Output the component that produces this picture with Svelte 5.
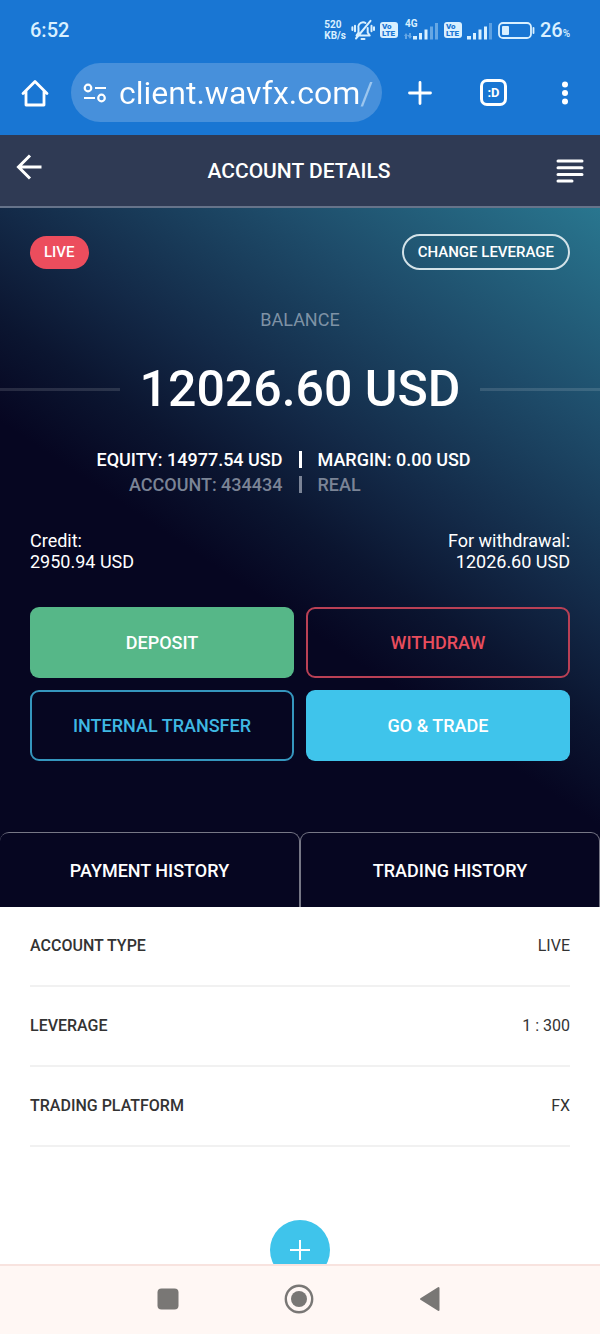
<script>
  const tabs = ['PAYMENT HISTORY', 'TRADING HISTORY'];
  const details = [
    ['ACCOUNT TYPE', 'LIVE'],
    ['LEVERAGE', '1 : 300'],
    ['TRADING PLATFORM', 'FX']
  ];
  let address = $state('client.wavfx.com/');
</script>

{#snippet volte()}
  <span class="volte"><span>Vo</span><span>LTE</span></span>
{/snippet}

<div class="screen">
  <div class="status">
    <time>6:52</time>
    <div class="indicators">
      <span class="speed"><span>520</span><span>KB/s</span></span>
      <svg class="bell" width="24" height="22" viewBox="0 0 24 22" fill="none" stroke="currentColor" stroke-width="2" stroke-linecap="round">
        <path d="M5.500 16.500h13.200M7.500 14V9.500a4.800 4.800 0 0 1 4.500-6.200q1.500 0 2.500.7M16.700 9v4.500l2 3M5.500 16.500l2-3M5 19.500 19.500 1.800" />
        <path d="M10.500 20h3M4 6.800v5.400M20.500 6.800v5.400M1.400 8.200v2.800M23 8.200v2.800" />
      </svg>
      {@render volte()}
      <span class="mobile">
        <span class="gen">4G</span>
        <svg width="36" height="19" viewBox="0 0 36 19" fill="currentColor">
          <path opacity=".4" d="M1 15l2-3 2 3H4v3H2v-3zM5 14h1v-2h2v3h1l-2 3-2-3z" />
          <rect x="10" y="15" width="4" height="3.500" /><rect x="16" y="12" width="3" height="6.500" />
          <rect x="21.500" y="8.500" width="3" height="10" />
          <g opacity=".4"><rect x="27" y="5.500" width="3" height="13" /><rect x="32" y="2" width="3" height="16.500" /></g>
        </svg>
      </span>
      {@render volte()}
      <svg width="26" height="19" viewBox="0 0 26 19" fill="currentColor">
        <rect y="15" width="4" height="3.500" /><rect x="6" y="12" width="3" height="6.500" />
        <rect x="11.500" y="8.500" width="3" height="10" /><rect x="17" y="5.500" width="3" height="13" />
        <rect opacity=".35" x="22" y="2" width="3" height="16.500" />
      </svg>
      <svg class="battery" width="37" height="17" viewBox="0 0 37 17">
        <rect x="1" y="1" width="32" height="15" rx="4" fill="none" stroke="currentColor" stroke-width="1.800" />
        <rect x="4" y="4" width="7" height="9" rx="1" fill="currentColor" />
        <path d="M35.500 6v5" stroke="currentColor" stroke-width="1.800" stroke-linecap="round" />
      </svg>
      <span class="charge">26<small>%</small></span>
    </div>
  </div>

  <div class="browser">
    <button class="plain" aria-label="Home">
      <svg width="28" height="28" viewBox="0 0 28 28" fill="none" stroke="currentColor" stroke-width="2.800" stroke-linejoin="round" stroke-linecap="round">
        <path d="M2 14.500 14 2.500l12 12M5 12v14h18V12" />
      </svg>
    </button>
    <label class="omnibox">
      <svg width="24" height="20" viewBox="0 0 24 20" fill="none" stroke="currentColor" stroke-width="2.200">
        <circle cx="5" cy="5" r="3.300" /><path d="M12 5h11M1 15h11" /><circle cx="18.500" cy="15" r="3.300" />
      </svg>
      <span class="address">
        <input bind:value={address} aria-label="Address" />
      </span>
    </label>
    <div class="controls">
      <button class="plain" aria-label="New tab">
        <svg width="24" height="24" viewBox="0 0 24 24" stroke="currentColor" stroke-width="2.800" stroke-linecap="round"><path d="M12 1.500v21M1.500 12h21" /></svg>
      </button>
      <button class="tabcount" aria-label="Open tabs">:D</button>
      <button class="plain" aria-label="Browser menu">
        <svg width="8" height="24" viewBox="0 0 8 24" fill="currentColor"><circle cx="4" cy="3.500" r="3" /><circle cx="4" cy="12" r="3" /><circle cx="4" cy="20.500" r="3" /></svg>
      </button>
    </div>
  </div>

  <header>
    <button class="plain back" aria-label="Back">
      <svg width="26" height="26" viewBox="0 0 26 26" fill="none" stroke="currentColor" stroke-width="3"><path d="M25.500 13H3M14 1.500 2.500 13 14 24.500" /></svg>
    </button>
    <h1>ACCOUNT DETAILS</h1>
    <button class="plain" aria-label="Menu">
      <svg width="28" height="24" viewBox="0 0 28 24" stroke="currentColor" stroke-width="3" stroke-linecap="round"><path d="M2 2h24M2 8.700h24M2 15.400h24M2 22h14" /></svg>
    </button>
  </header>

  <main>
    <section class="hero">
      <div class="top">
        <span class="badge">LIVE</span>
        <button class="leverage">CHANGE LEVERAGE</button>
      </div>
      <h2>BALANCE</h2>
      <p class="balance">12026.60 USD</p>
      <div class="facts">
        <span>EQUITY: 14977.54 USD</span><i></i><span>MARGIN: 0.00 USD</span>
      </div>
      <div class="facts dim">
        <span>ACCOUNT: 434434</span><i></i><span>REAL</span>
      </div>
      <div class="funds">
        <p>Credit:<br />2950.94 USD</p>
        <p>For withdrawal:<br />12026.60 USD</p>
      </div>
      <div class="actions">
        <button class="deposit">DEPOSIT</button>
        <button class="withdraw">WITHDRAW</button>
        <button class="transfer">INTERNAL TRANSFER</button>
        <button class="trade">GO &amp; TRADE</button>
      </div>
      <nav class="tabs">
        {#each tabs as tab}<button>{tab}</button>{/each}
      </nav>
    </section>

    <dl>
      {#each details as [name, value]}
        <div><dt>{name}</dt><dd>{value}</dd></div>
      {/each}
    </dl>
    <div class="add">
      <button aria-label="Add">
        <svg width="20" height="20" viewBox="0 0 20 20" stroke="currentColor" stroke-width="2"><path d="M10 0v20M0 10h20" /></svg>
      </button>
    </div>
  </main>

  <nav class="system">
    <button class="plain" aria-label="Recent apps">
      <svg width="22" height="22" viewBox="0 0 22 22" fill="currentColor"><rect x=".5" y=".5" width="21" height="21" rx="4" /></svg>
    </button>
    <button class="plain" aria-label="Home screen">
      <svg width="30" height="30" viewBox="0 0 30 30" fill="currentColor"><circle cx="15" cy="15" r="13.200" fill="none" stroke="currentColor" stroke-width="2.400" /><circle cx="15" cy="15" r="8" /></svg>
    </button>
    <button class="plain" aria-label="Go back">
      <svg width="22" height="26" viewBox="0 0 22 26" fill="currentColor" stroke="currentColor" stroke-width="2" stroke-linejoin="round"><path d="M19.500 2v22L2 13z" /></svg>
    </button>
  </nav>
</div>

<style>
  :global(body) { margin: 0; }
  .screen {
    display: flex;
    flex-direction: column;
    height: 100vh;
    overflow: hidden;
    background: #fff;
    color: #fff;
    font-family: Roboto, sans-serif;
    font-size: 18px;
  }
  .screen :is(h1, h2, p, dl, dd) { margin: 0; }
  svg { display: block; flex: none; }
  button { font: inherit; font-weight: 500; color: inherit; padding: 0; cursor: pointer; }
  .plain { display: flex; border: 0; background: none; }

  .status {
    display: flex;
    align-items: center;
    justify-content: space-between;
    flex: none;
    height: 60px;
    padding: 0 30px;
    box-sizing: border-box;
    background: #1976d3;
    color: #d9f0ff;
  }
  time { font-size: 20px; font-weight: 500; }
  .indicators { display: flex; align-items: center; gap: 5px; }
  .speed { font-size: 10px; line-height: 11px; font-weight: 700; display: grid; }
  .volte {
    display: grid;
    width: 18px;
    padding: 1px 2px;
    box-sizing: border-box;
    border-radius: 3px;
    background: #d9f0ff;
    color: #1976d3;
    font-size: 8px;
    line-height: 7px;
    font-weight: 900;
  }
  .mobile { position: relative; }
  .gen { position: absolute; left: 2px; top: -2px; font-size: 10px; line-height: 10px; font-weight: 700; }
  .charge { font-size: 20px; font-weight: 500; }
  .charge small { font-size: 10px; }

  .browser {
    display: flex;
    align-items: center;
    flex: none;
    height: 75px;
    padding: 3px 31px 13px 21px;
    box-sizing: border-box;
    background: #1976d3;
  }
  .omnibox {
    display: flex;
    align-items: center;
    gap: 12px;
    flex: 1;
    min-width: 0;
    height: 59px;
    margin: 0 26px 0 22px;
    padding: 0 9px 0 12px;
    box-sizing: border-box;
    border-radius: 30px;
    background: #4790db;
  }
  .address { flex: 1; min-width: 0; }
  input {
    width: 100%;
    padding: 0;
    border: 0;
    outline: 0;
    font: inherit;
    font-size: 32px;
    color: transparent;
    background: linear-gradient(90deg, #fff 241px, #9cc6ee 241px);
    background-clip: text;
  }
  .controls {
    display: flex;
    align-items: center;
    gap: 48px;
  }
  .tabcount {
    width: 27px;
    height: 27px;
    box-sizing: border-box;
    border: 3px solid #fff;
    border-radius: 7px;
    background: none;
    font-size: 13px;
    line-height: 20px;
    font-weight: 700;
  }
  .controls .plain:last-child { padding-left: 6px; }

  header {
    display: flex;
    align-items: center;
    justify-content: space-between;
    flex: none;
    height: 73px;
    padding: 0 16px;
    box-sizing: border-box;
    border-bottom: 2px solid #66738a;
    background: #2f3a54;
  }
  h1 { font-size: 21px; font-weight: 500; }
  .back { padding-bottom: 8px; }

  main { flex: 1; min-height: 0; overflow: hidden; }
  .hero {
    padding-top: 26px;
    background: linear-gradient(214deg, #29768f 0%, #1e4c6a 20%, #132947 37%, #0b1530 47%, #060621 56%, #060621 100%);
  }
  .top { display: flex; align-items: center; justify-content: space-between; padding: 0 30px; }
  .badge {
    padding: 0 14px;
    border-radius: 17px;
    background: #ec4d5d;
    font-size: 15px;
    line-height: 33px;
    font-weight: 500;
  }
  .leverage {
    height: 36px;
    padding: 0 14px;
    border: 2px solid #d3e2e8;
    border-radius: 18px;
    background: none;
    font-size: 15px;
  }
  h2 {
    padding-top: 39px;
    font-size: 18px;
    line-height: 21px;
    font-weight: 400;
    text-align: center;
    color: #7e92a5;
  }
  .balance {
    display: flex;
    align-items: center;
    gap: 20px;
    padding: 29px 0 28px;
    font-size: 50px;
    line-height: 60px;
    font-weight: 500;
    white-space: nowrap;
  }
  .balance::before, .balance::after { content: ''; flex: 1; height: 3px; background: rgb(255 255 255 / 13%); }
  .facts {
    display: grid;
    grid-template-columns: 1fr 3px 1fr;
    align-items: center;
    gap: 16px;
    line-height: 25px;
    font-weight: 500;
  }
  .facts span:first-child { text-align: right; }
  .facts i { height: 17px; background: currentColor; }
  .dim { color: #7b8496; }
  .funds {
    display: flex;
    justify-content: space-between;
    padding: 33px 30px 35px;
    line-height: 21px;
  }
  .funds p:last-child { text-align: right; }
  .actions { display: grid; grid-template-columns: 1fr 1fr; gap: 12px; padding: 0 30px 71px; }
  .actions button { height: 71px; border: 2px solid; border-radius: 9px; background: none; }
  .actions .deposit { border: 0; background: #56b788; }
  .actions .withdraw { color: #e84d5d; border-color: #b94055; }
  .actions .transfer { color: #3fb8e3; border-color: #3596be; }
  .actions .trade { border: 0; background: #3fc4eb; }
  .tabs { display: grid; grid-template-columns: 1fr 1fr; }
  .tabs button {
    height: 75px;
    border: 1px solid #767786;
    border-bottom: 0;
    border-radius: 9px 9px 0 0;
    background: none;
  }
  .tabs button:first-child { border-left: 0; }

  dl { padding: 0 30px; font-size: 16px; color: #333; }
  dl div {
    display: flex;
    justify-content: space-between;
    line-height: 78px;
    border-bottom: 2px solid #f1f1f1;
  }
  dt { font-weight: 500; }
  .add { display: flex; justify-content: center; padding-top: 73px; }
  .add button {
    display: grid;
    place-items: center;
    width: 60px;
    height: 60px;
    border: 0;
    border-radius: 50%;
    background: #3fc4eb;
  }

  .system {
    display: flex;
    align-items: center;
    justify-content: center;
    gap: 105px;
    flex: none;
    height: 70px;
    padding: 0 3px 2px 0;
    box-sizing: border-box;
    border-top: 2px solid #f8e3df;
    background: #fff7f4;
    color: #797775;
  }
</style>
